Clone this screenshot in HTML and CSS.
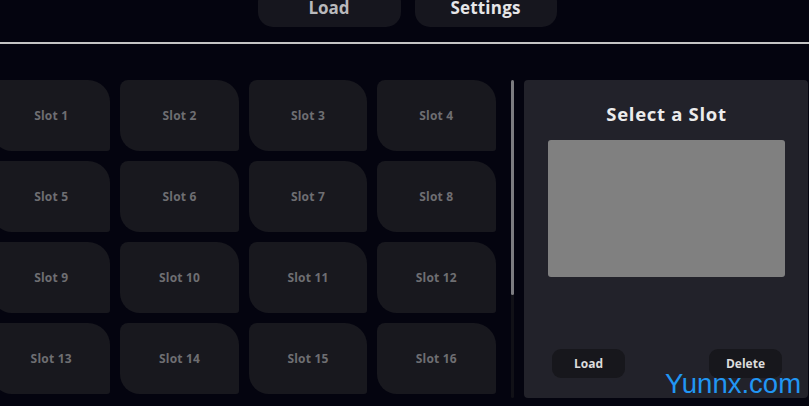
FILE: index.html
```html
<!DOCTYPE html>
<html>
<head>
<meta charset="utf-8">
<link rel="stylesheet" href="styles.css">
</head>
<body>
<header class="topbar">
  <button class="tab tab-load">Load</button>
  <button class="tab tab-settings">Settings</button>
</header>
<div class="divider"></div>
<main class="main">
  <div class="slots-view">
    <div class="slots">
      <div class="slot">Slot 1</div>
      <div class="slot">Slot 2</div>
      <div class="slot">Slot 3</div>
      <div class="slot">Slot 4</div>
      <div class="slot">Slot 5</div>
      <div class="slot">Slot 6</div>
      <div class="slot">Slot 7</div>
      <div class="slot">Slot 8</div>
      <div class="slot">Slot 9</div>
      <div class="slot">Slot 10</div>
      <div class="slot">Slot 11</div>
      <div class="slot">Slot 12</div>
      <div class="slot">Slot 13</div>
      <div class="slot">Slot 14</div>
      <div class="slot">Slot 15</div>
      <div class="slot">Slot 16</div>
    </div>
  </div>
  <div class="scrollbar"><div class="thumb"></div></div>
  <section class="panel">
    <h2 class="panel-title">Select a Slot</h2>
    <div class="preview"></div>
    <div class="actions">
      <button class="action">Load</button>
      <button class="action">Delete</button>
    </div>
  </section>
</main>
<div class="watermark">Yunnx.com</div>
</body>
</html>
```
FILE: styles.css
```css
html, body {
  margin: 0;
  padding: 0;
}
body {
  width: 809px;
  height: 406px;
  overflow: hidden;
  background: #04040f;
  font-family: "Open Sans", "Liberation Sans", sans-serif;
  position: relative;
}
.topbar {
  height: 42px;
  display: flex;
  justify-content: center;
  gap: 14px;
  padding-left: 5px;
  box-sizing: border-box;
}
.tab {
  margin-top: -13px;
  width: 143px;
  height: 40px;
  border: none;
  border-radius: 15px;
  background: #16161e;
  font-family: inherit;
  font-weight: 700;
  font-size: 17px;
  padding: 0;
}
.tab-load { color: #b9b9bc; }
.tab-settings { color: #e6e6e8; width: 142px; letter-spacing: 0.2px; }
.divider {
  height: 2px;
  background: #c4c4c4;
}
.main {
  display: flex;
  padding-top: 36px;
  height: 318px;
}
.slots-view {
  width: 505px;
  overflow: hidden;
}
.slots {
  margin-left: -8px;
  display: grid;
  grid-template-columns: repeat(4, 118.4px);
  grid-auto-rows: 71px;
  gap: 10px;
}
.slot {
  background: #18181e;
  border-radius: 8px 22px 3px 20px;
  display: flex;
  align-items: center;
  justify-content: center;
  color: #6e6e72;
  font-weight: 700;
  font-size: 12px;
  letter-spacing: 0.2px;
}
.scrollbar {
  margin-left: 6px;
  width: 3px;
  background: #111117;
  border-radius: 2px;
}
.thumb {
  height: 215px;
  background: #7c7c80;
  border-radius: 2px;
}
.panel {
  margin-left: 10px;
  width: 284px;
  background: #22222a;
  border-radius: 4px;
  padding: 20px 23px 20px 24px;
  box-sizing: border-box;
  display: flex;
  flex-direction: column;
}
.panel-title {
  margin: 0;
  text-align: center;
  color: #ececec;
  font-size: 18.5px;
  font-weight: 700;
  line-height: 28px;
  letter-spacing: 0.7px;
}
.preview {
  margin-top: 12px;
  height: 137px;
  background: #808080;
  border-radius: 3px;
}
.actions {
  margin-top: auto;
  display: flex;
  justify-content: space-between;
  padding: 0 3px 0 4px;
}
.action {
  width: 73px;
  height: 29px;
  border: none;
  border-radius: 9px;
  background: #17171c;
  color: #dcdcdc;
  font-family: inherit;
  font-weight: 700;
  font-size: 12px;
  padding: 0;
}
.watermark {
  position: absolute;
  left: 665px;
  top: 368px;
  color: #2196f3;
  font-family: "Liberation Sans", Arial, sans-serif;
  font-size: 27.5px;
  line-height: 32px;
}
```
